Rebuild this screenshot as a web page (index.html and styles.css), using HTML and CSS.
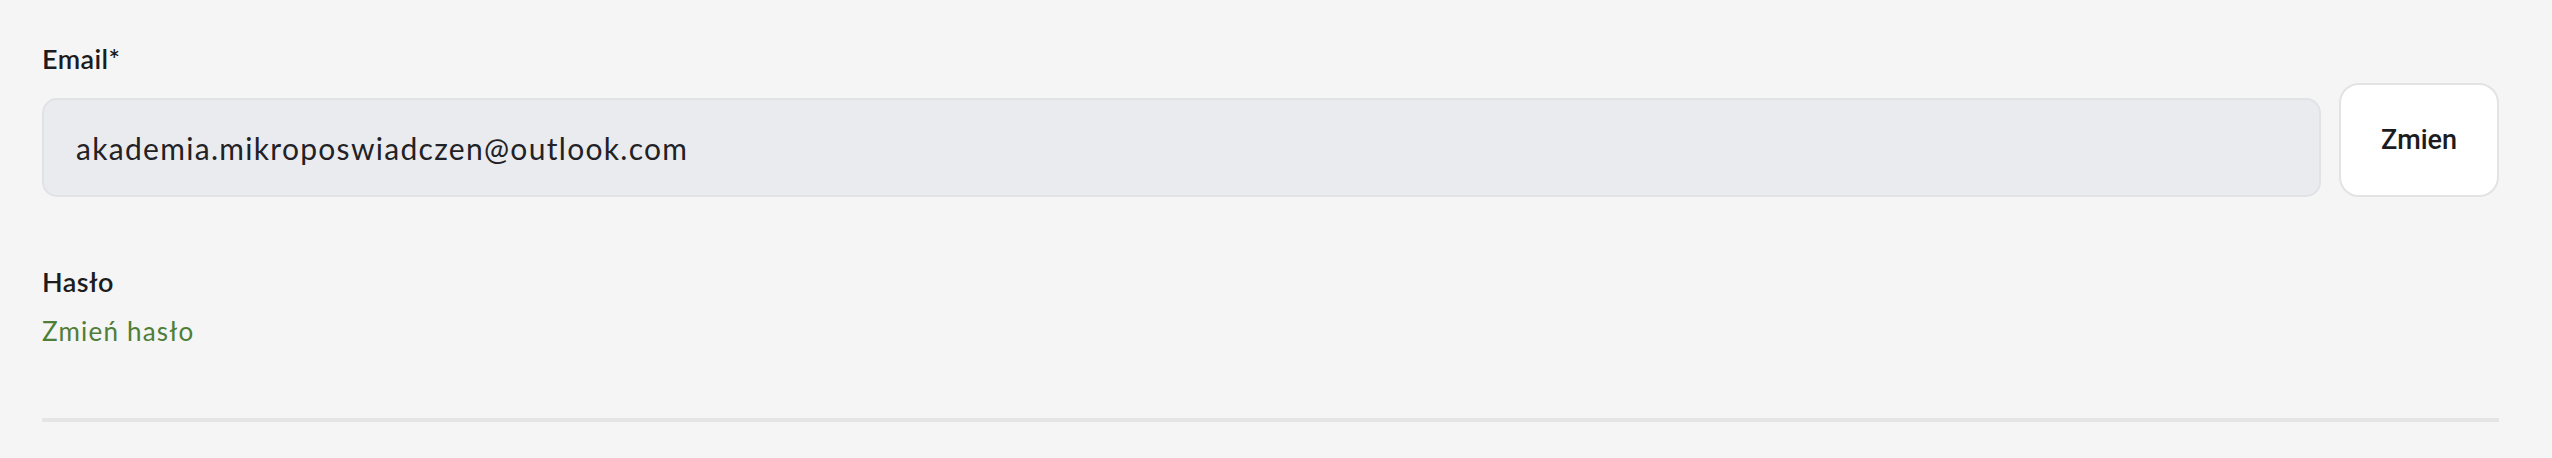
FILE: index.html
```html
<!DOCTYPE html>
<html lang="pl">
<head>
<meta charset="utf-8">
<title>Konto</title>
<link rel="stylesheet" href="styles.css">
</head>
<body>
<main class="settings">
  <section class="field">
    <label class="field-label" for="email">Email*</label>
    <div class="email-row">
      <input class="email-input" id="email" type="text" value="akademia.mikroposwiadczen@outlook.com" readonly>
      <button class="change-btn" type="button">Zmien</button>
    </div>
  </section>
  <section class="field password">
    <div class="field-label">Hasło</div>
    <a class="change-link" href="#">Zmień hasło</a>
  </section>
  <hr class="divider">
</main>
</body>
</html>
```
FILE: styles.css
```css
html, body {
  margin: 0;
  background: #f5f5f5;
}
body {
  font-family: Lato, "Noto Sans", sans-serif;
  color: #1c1c1e;
}
.settings {
  padding: 43px 53px 0 42px;
}
.field-label {
  display: block;
  font-size: 27px;
  line-height: 32px;
  font-weight: 600;
  letter-spacing: 0.4px;
  color: #1c1c1e;
}
.email-row {
  display: flex;
  align-items: flex-end;
  gap: 18px;
  margin-top: 8px;
}
.email-input {
  flex: 1;
  box-sizing: border-box;
  height: 99px;
  margin: 0;
  padding: 0 0 0 32px;
  border: 2px solid #e1e2e5;
  border-radius: 15px;
  background: #eaebee;
  font-family: Lato, "Noto Sans", sans-serif;
  font-size: 30px;
  letter-spacing: 1.3px;
  color: #222226;
  outline: none;
}
.change-btn {
  box-sizing: border-box;
  width: 160px;
  height: 114px;
  margin: 0;
  padding: 0;
  border: 2px solid #e3e3e5;
  border-radius: 20px;
  background: #ffffff;
  font-family: Roboto, "Liberation Sans", Arial, sans-serif;
  font-size: 27px;
  font-weight: 500;
  color: #1c1c1e;
}
.password {
  margin-top: 69px;
}
.change-link {
  display: block;
  margin-top: 18px;
  font-size: 26px;
  line-height: 31px;
  letter-spacing: 1.2px;
  color: #4e7e37;
  text-decoration: none;
}
.divider {
  margin: 71px 0 0;
  height: 4px;
  border: 0;
  background: #e5e5e5;
}
```
